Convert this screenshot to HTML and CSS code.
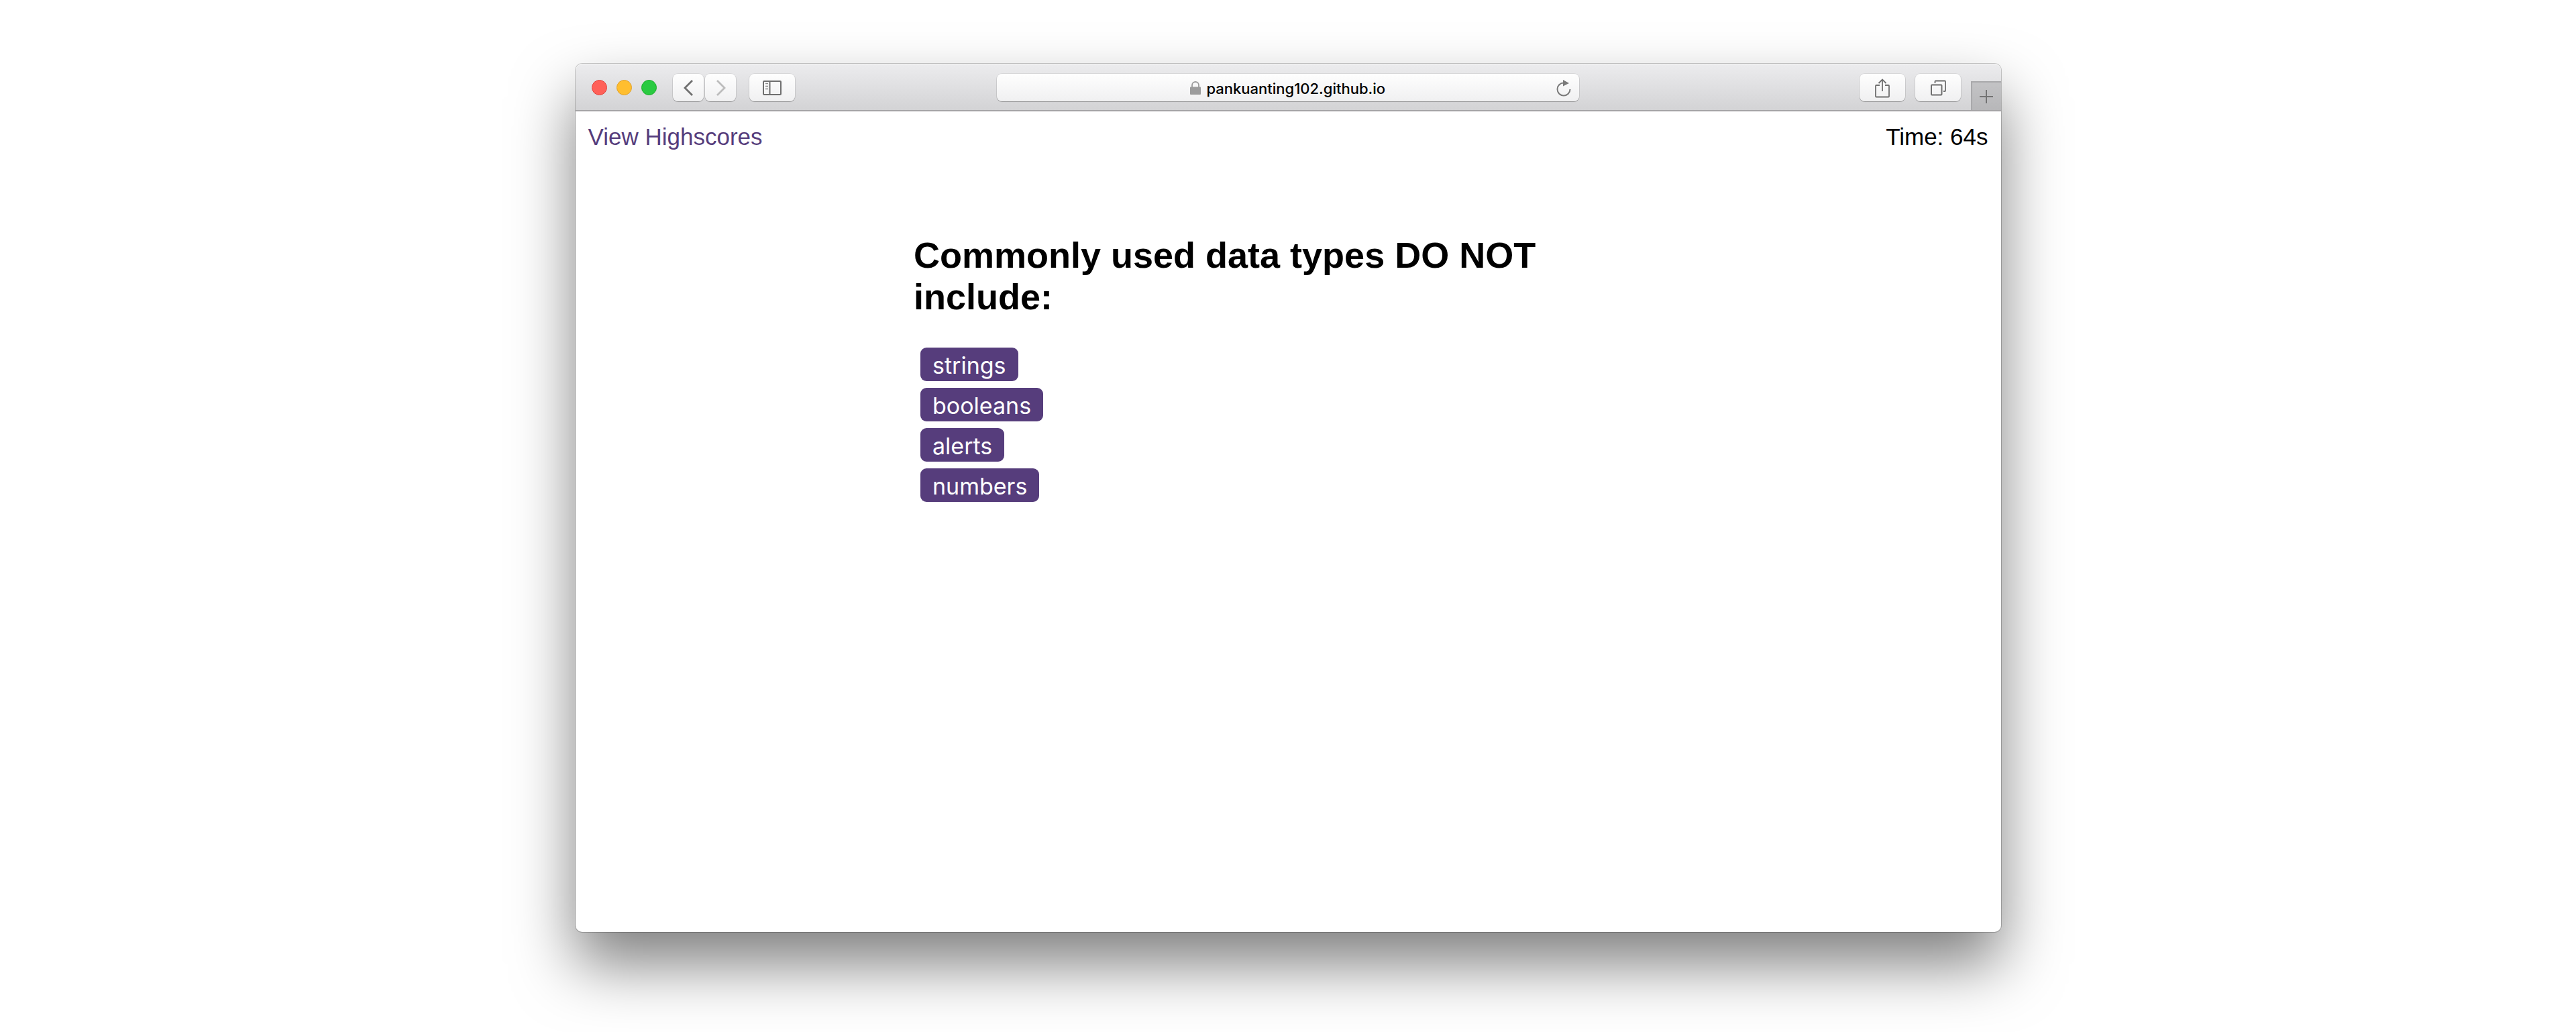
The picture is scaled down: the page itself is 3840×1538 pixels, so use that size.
FILE: index.html
```html
<!DOCTYPE html>
<html lang="en">
<head>
<meta charset="utf-8">
<meta name="viewport" content="width=device-width, initial-scale=1">
<title>Code Quiz</title>
<link rel="stylesheet" href="styles.css">
</head>
<body>
<div class="window">
  <div class="toolbar">
    <div class="tools tools-left">
      <div class="lights">
        <button class="light light-close" aria-label="Close"></button>
        <button class="light light-minimize" aria-label="Minimize"></button>
        <button class="light light-zoom" aria-label="Zoom"></button>
      </div>
      <div class="history">
        <button class="tool tool-narrow" aria-label="Back">
          <svg class="icon" width="24" height="24" viewBox="0 0 24 24"><path d="M18 1 7 12l11 11" stroke="#6f6f6f" stroke-width="2.800"/></svg>
        </button>
        <button class="tool tool-narrow" aria-label="Forward">
          <svg class="icon" width="24" height="24" viewBox="0 0 24 24"><path d="M7 1l11 11L7 23" stroke="#bdbdbd" stroke-width="2.800"/></svg>
        </button>
      </div>
      <button class="tool" aria-label="Show sidebar">
        <svg class="icon" width="28" height="24" viewBox="0 0 28 24"><rect x="1" y="2" width="26" height="20" rx="1" stroke="#6f6f6f" stroke-width="2"/><path d="M10.500 2v20" stroke="#6f6f6f" stroke-width="2"/><path d="M4 5.500h4M4 9.500h4M4 13.500h4" stroke="#8a8a8a" stroke-width="1.500"/></svg>
      </button>
    </div>
    <div class="address">
      <div class="address-site">
        <svg class="icon" width="16" height="20" viewBox="0 0 16 20"><path d="M3 9V6a5 5 0 0 1 10 0v3" stroke="#9c9c9c" stroke-width="1.800"/><rect x="0" y="8.500" width="16" height="11.500" rx="1" fill="#9c9c9c"/></svg>
        <input class="address-input" type="text" aria-label="Address" value="pankuanting102.github.io">
      </div>
      <button class="reload" aria-label="Reload">
        <svg class="icon" width="22" height="26" viewBox="0 0 22 26"><path d="M11 5.500A9.500 9.500 0 1 0 20.500 15" stroke="#7a7a7a" stroke-width="2"/><path d="M10 1l9 5-9 4.500z" fill="#7a7a7a"/></svg>
      </button>
    </div>
    <div class="tools tools-right">
      <button class="tool" aria-label="Share">
        <svg class="icon" width="22" height="30" viewBox="0 0 22 30"><path d="M7 11H2a1 1 0 0 0-1 1v15.500a1 1 0 0 0 1 1h18a1 1 0 0 0 1-1V12a1 1 0 0 0-1-1h-5M11 20V2.500M5.500 8 11 2.500 16.500 8" stroke="#6f6f6f" stroke-width="1.800"/></svg>
      </button>
      <button class="tool" aria-label="Show all tabs">
        <svg class="icon" width="24" height="24" viewBox="0 0 24 24"><rect x="2" y="7.500" width="15.500" height="15" rx="1" stroke="#6f6f6f" stroke-width="2"/><path d="M7.500 5V2.500a1 1 0 0 1 1-1h13.500a1 1 0 0 1 1 1V16a1 1 0 0 1-1 1h-2" stroke="#6f6f6f" stroke-width="1.800"/></svg>
      </button>
      <button class="new-tab" aria-label="New tab">
        <svg class="icon" width="22" height="22" viewBox="0 0 22 22"><path d="M11 1v20M1 11h20" stroke="#737373" stroke-width="2"/></svg>
      </button>
    </div>
  </div>
  <header class="status">
    <a class="scores-link" href="#highscores">View Highscores</a>
    <span>Time: 64s</span>
  </header>
  <main class="quiz">
    <h1 class="question">Commonly used data types DO NOT include:</h1>
    <div class="choices">
      <button class="choice">strings</button>
      <button class="choice">booleans</button>
      <button class="choice">alerts</button>
      <button class="choice">numbers</button>
    </div>
  </main>
</div>
</body>
</html>
```
FILE: styles.css
```css
* {
  box-sizing: border-box;
}

body {
  margin: 0;
  min-height: 100vh;
  padding: 95px 24px 149px;
  display: flex;
  justify-content: center;
  background: #fff;
  color: #000;
  font-family: "Liberation Sans", Arial, sans-serif;
  font-size: 35px;
}

button,
input {
  margin: 0;
  padding: 0;
  border: 0;
  font: inherit;
}

.icon {
  display: block;
  flex: none;
  fill: none;
}

.window {
  width: 100%;
  max-width: 2125px;
  border-radius: 10px;
  background: #fff;
  box-shadow: 0 0 0 1px rgba(0, 0, 0, 0.2), 0 48px 92px rgba(0, 0, 0, 0.5);
}

.toolbar {
  display: grid;
  grid-template-columns: minmax(0, 1fr) minmax(0, 868px) minmax(0, 1fr);
  align-items: center;
  height: 71px;
  padding-top: 2px;
  border-bottom: 2px solid #a5a4a6;
  border-radius: 10px 10px 0 0;
  background: linear-gradient(#ececee, #d3d3d5);
  box-shadow: inset 0 1px #f5f5f5;
}

.tools {
  display: flex;
  align-items: center;
  height: 100%;
}

.tools-left {
  gap: 20px;
  padding-left: 24px;
}

.tools-right {
  justify-content: flex-end;
  gap: 15px;
}

.lights {
  display: flex;
  gap: 14px;
  margin-right: 4px;
}

.light {
  width: 23px;
  height: 23px;
  border-radius: 50%;
}

.light-close {
  border: 1px solid #e2463f;
  background: #ff6058;
}

.light-minimize {
  border: 1px solid #e0a12c;
  background: #ffbe2f;
}

.light-zoom {
  border: 1px solid #1dad2b;
  background: #2aca41;
}

.history {
  display: flex;
  gap: 2px;
}

.tool,
.address {
  height: 41px;
  border-radius: 8px;
  background: linear-gradient(#fefefe, #f0f0f1);
  box-shadow: 0 0 0 1px rgba(0, 0, 0, 0.07), 0 1px 1px rgba(0, 0, 0, 0.28);
}

.tool {
  display: flex;
  align-items: center;
  justify-content: center;
  width: 68px;
}

.tool-narrow {
  width: 46px;
}

.address {
  display: grid;
  grid-template-columns: 34px 1fr 34px;
  align-items: center;
}

.address-site {
  grid-column: 2;
  display: flex;
  align-items: center;
  justify-content: center;
  gap: 9px;
}

.address-input {
  width: 268px;
  padding-top: 2px;
  background: none;
  font-family: Inter, sans-serif;
  font-size: 22px;
  font-weight: 500;
}

.reload {
  background: none;
}

.new-tab {
  display: flex;
  align-items: center;
  justify-content: center;
  align-self: flex-end;
  width: 45px;
  height: 43px;
  border-top: 2px solid #a9a9ab;
  border-left: 2px solid #a9a9ab;
  background: linear-gradient(#c3c3c5, #b7b7b9);
}

.status {
  display: flex;
  justify-content: space-between;
  padding: 18px 19px;
  line-height: 40px;
}

.scores-link {
  color: #563d7c;
  text-decoration: none;
}

.quiz {
  max-width: 1116px;
  margin: 0 auto;
  padding: 107px 0 40px;
}

.question {
  margin: 0;
  font-size: 54px;
  line-height: 62px;
}

.choices {
  display: flex;
  flex-direction: column;
  align-items: flex-start;
  gap: 10px;
  padding: 45px 10px;
}

.choice {
  height: 50px;
  padding: 2px 18px 0;
  border-radius: 9px;
  background: #563d7c;
  color: #fff;
  font-family: Inter, sans-serif;
  font-size: 34px;
}
```
